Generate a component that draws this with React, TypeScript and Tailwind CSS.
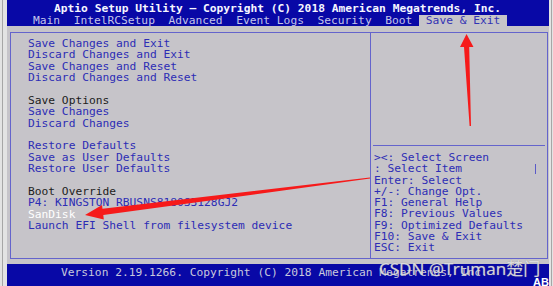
import React from 'react';

type Tone = 'item' | 'label' | 'active' | 'blank';

const menu: { text: string; tone: Tone }[] = [
  { text: 'Save Changes and Exit', tone: 'item' },
  { text: 'Discard Changes and Exit', tone: 'item' },
  { text: 'Save Changes and Reset', tone: 'item' },
  { text: 'Discard Changes and Reset', tone: 'item' },
  { text: '', tone: 'blank' },
  { text: 'Save Options', tone: 'label' },
  { text: 'Save Changes', tone: 'item' },
  { text: 'Discard Changes', tone: 'item' },
  { text: '', tone: 'blank' },
  { text: 'Restore Defaults', tone: 'item' },
  { text: 'Save as User Defaults', tone: 'item' },
  { text: 'Restore User Defaults', tone: 'item' },
  { text: '', tone: 'blank' },
  { text: 'Boot Override', tone: 'label' },
  { text: 'P4: KINGSTON RBUSNS8180S3128GJ2', tone: 'item' },
  { text: 'SanDisk', tone: 'active' },
  { text: 'Launch EFI Shell from filesystem device', tone: 'item' },
];

const help = [
  '><: Select Screen',
  ': Select Item',
  'Enter: Select',
  '+/-: Change Opt.',
  'F1: General Help',
  'F8: Previous Values',
  'F9: Optimized Defaults',
  'F10: Save & Exit',
  'ESC: Exit',
];

const toneClass: Record<Tone, string> = {
  item: 'text-[#2d2db5]',
  label: 'text-[#1c1c1c]',
  active: 'text-white',
  blank: '',
};

function EdgeStrip() {
  return (
    <div className="flex w-full h-full bg-[#e3e3e3]">
      <div className="ml-[2px] w-px h-full bg-[#a6a6a6]" />
    </div>
  );
}

export default function App() {
  return (
    <div className="relative flex w-[553px] h-[286px] overflow-hidden font-['DejaVu_Sans_Mono',monospace] text-[11.25px]">
      <div className="w-[7px] shrink-0">
        <EdgeStrip />
      </div>

      <div className="flex flex-col w-[542px] shrink-0">
        {/* title */}
        <div className="h-[15px] bg-[#0808a6] pt-[3px] pl-[47px] leading-[11.375px] font-bold text-[#f6f6ff] whitespace-pre">
          Aptio Setup Utility – Copyright (C) 2018 American Megatrends, Inc.
        </div>

        {/* tabs */}
        <div className="flex h-[11px] bg-[#0808a6] pl-[26px] leading-[11px] whitespace-pre text-[#c4c4ea]">
          <span>Main  IntelRCSetup  Advanced  Event Logs  Security  Boot </span>
          <span className="bg-[#c6c4c9] text-[#3232b4]"> Save &amp; Exit </span>
        </div>

        {/* body */}
        <div className="flex-1 bg-[#c6c4c9] pt-[6px] pl-[3px]">
          <div className="flex w-[538px] h-[227px] border border-[#6464cc]">
            <div className="w-[360px] border-r border-[#6464cc] pt-[5px] pl-[17px] whitespace-pre leading-[11.375px]">
              {menu.map((line, i) => (
                <div key={i} className={`h-[11.375px] ${toneClass[line.tone]}`}>
                  {line.text}
                </div>
              ))}
            </div>
            <div className="flex flex-col flex-1">
              <div className="h-[113px] mx-[2px] border-b border-[#6464cc]" />
              <div className="pt-[6px] pl-[3px] whitespace-pre leading-[11.25px] text-[#2d2db5]">
                {help.map((line, i) => (
                  <div key={i} className="flex items-center justify-between h-[11.25px]">
                    <span>{line}</span>
                    {i === 1 && <span className="mr-[11px] w-px h-[10px] bg-[#5a5ac8]" />}
                  </div>
                ))}
              </div>
            </div>
          </div>
        </div>

        {/* footer */}
        <div className="h-[22px] bg-[#0808a6] pt-[3px] pl-[54px] leading-[11.375px] text-[#c8c8dc] whitespace-pre">
          Version 2.19.1266. Copyright (C) 2018 American Megatrends, Inc.
        </div>
      </div>

      <div className="w-[4px] shrink-0">
        <EdgeStrip />
      </div>

      {/* watermark + corner */}
      <div className="absolute left-[379px] top-[258px] font-['Noto_Sans','Noto_Sans_CJK_SC',sans-serif] text-[17px] leading-[22px] text-white/70 [text-shadow:0_0_1px_#888]">
        CSDN @Truman楚门
      </div>
      <div className="absolute left-[533px] top-[277px] font-['Liberation_Sans',sans-serif] font-bold text-[11px] leading-none text-white">
        AB
      </div>

      {/* red annotation arrows */}
      <svg className="absolute inset-0 pointer-events-none" width="553" height="286" viewBox="0 0 553 286">
        <polygon
          points="466.5,34 473.5,47 469.2,47 471,126 469.6,126 464,47 460,47"
          fill="#f61a1a"
        />
        <polygon
          points="85,215 102,205 102.5,208.8 369.9,177.4 370.1,178.6 103.3,215 103.8,219.5"
          fill="#f61a1a"
        />
      </svg>
    </div>
  );
}
